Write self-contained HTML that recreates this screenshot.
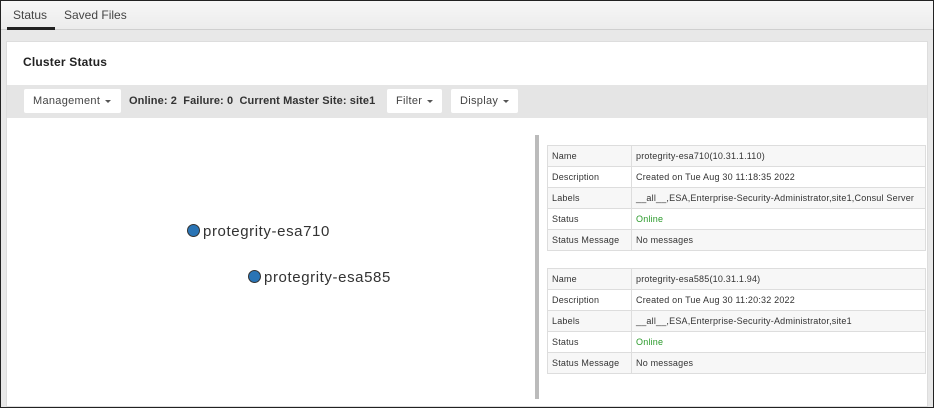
<!DOCTYPE html>
<html><head><style>
*{margin:0;padding:0;box-sizing:border-box}
body{width:934px;height:408px;overflow:hidden;font-family:"Liberation Sans",sans-serif;background:#e8e8e8;position:relative;border:1px solid #222}
.top{position:absolute;left:0;top:0;width:932px;height:29px;background:linear-gradient(#f7f7f7,#ececec);border-bottom:1px solid #cfcfcf}
.tab{position:absolute;top:7px;font-size:12px;color:#444}
.panel{position:absolute;left:5px;top:40px;width:922px;height:366px;background:#fff;border:1px solid #ddd}
.ttl{position:absolute;left:16px;top:13px;font-size:12px;font-weight:bold;color:#222;letter-spacing:.2px}
.bar{position:absolute;left:0;top:43px;width:920px;height:33px;background:#e5e5e5}
.btn{position:absolute;top:4px;height:24px;background:#fff;border-radius:2px;font-size:11px;color:#444;line-height:24px;padding-left:9px;letter-spacing:.3px}
.btn:after{content:"";display:inline-block;margin-left:5px;border-left:3px solid transparent;border-right:3px solid transparent;border-top:3px solid #555;vertical-align:middle}
.info{position:absolute;left:122px;top:4px;line-height:24px;font-size:11px;font-weight:bold;color:#333;letter-spacing:.1px}
.vbar{position:absolute;left:528px;top:93px;width:4px;height:264px;background:#bbb}
table{position:absolute;left:540px;border-collapse:collapse;width:379px;font-size:9px;color:#333;letter-spacing:.2px}
td{border:1px solid #ddd;height:21px;padding-left:4px}
td:first-child{width:84px}
tr:nth-child(odd){background:#f7f7f7}
.g{color:#2a9a2a}
.node{position:absolute;font-size:15px;color:#333;letter-spacing:.6px}
.node i{display:inline-block;width:13px;height:13px;border-radius:50%;background:#2a74b5;border:1.5px solid #333;vertical-align:-1px;margin-right:3px}
</style></head><body>
<div class="top"><span class="tab" style="left:12px">Status</span><span class="tab" style="left:63px">Saved Files</span><div style="position:absolute;left:6px;top:26px;width:48px;height:3px;background:#222"></div></div>
<div class="panel">
<div class="ttl">Cluster Status</div>
<div class="bar">
<div class="btn" style="left:17px;width:97px">Management</div>
<div class="info">Online: 2&nbsp; Failure: 0&nbsp; Current Master Site: site1</div>
<div class="btn" style="left:380px;width:55px">Filter</div>
<div class="btn" style="left:444px;width:67px">Display</div>
</div>
<div class="node" style="left:180px;top:181px"><i></i>protegrity-esa710</div>
<div class="node" style="left:241px;top:227px"><i></i>protegrity-esa585</div>
<div class="vbar"></div>
<table style="top:103px">
<tr><td>Name</td><td>protegrity-esa710(10.31.1.110)</td></tr>
<tr><td>Description</td><td>Created on Tue Aug 30 11:18:35 2022</td></tr>
<tr><td>Labels</td><td>__all__,ESA,Enterprise-Security-Administrator,site1,Consul Server</td></tr>
<tr><td>Status</td><td class="g">Online</td></tr>
<tr><td>Status Message</td><td>No messages</td></tr>
</table>
<table style="top:226px">
<tr><td>Name</td><td>protegrity-esa585(10.31.1.94)</td></tr>
<tr><td>Description</td><td>Created on Tue Aug 30 11:20:32 2022</td></tr>
<tr><td>Labels</td><td>__all__,ESA,Enterprise-Security-Administrator,site1</td></tr>
<tr><td>Status</td><td class="g">Online</td></tr>
<tr><td>Status Message</td><td>No messages</td></tr>
</table>
</div>
</body></html>
